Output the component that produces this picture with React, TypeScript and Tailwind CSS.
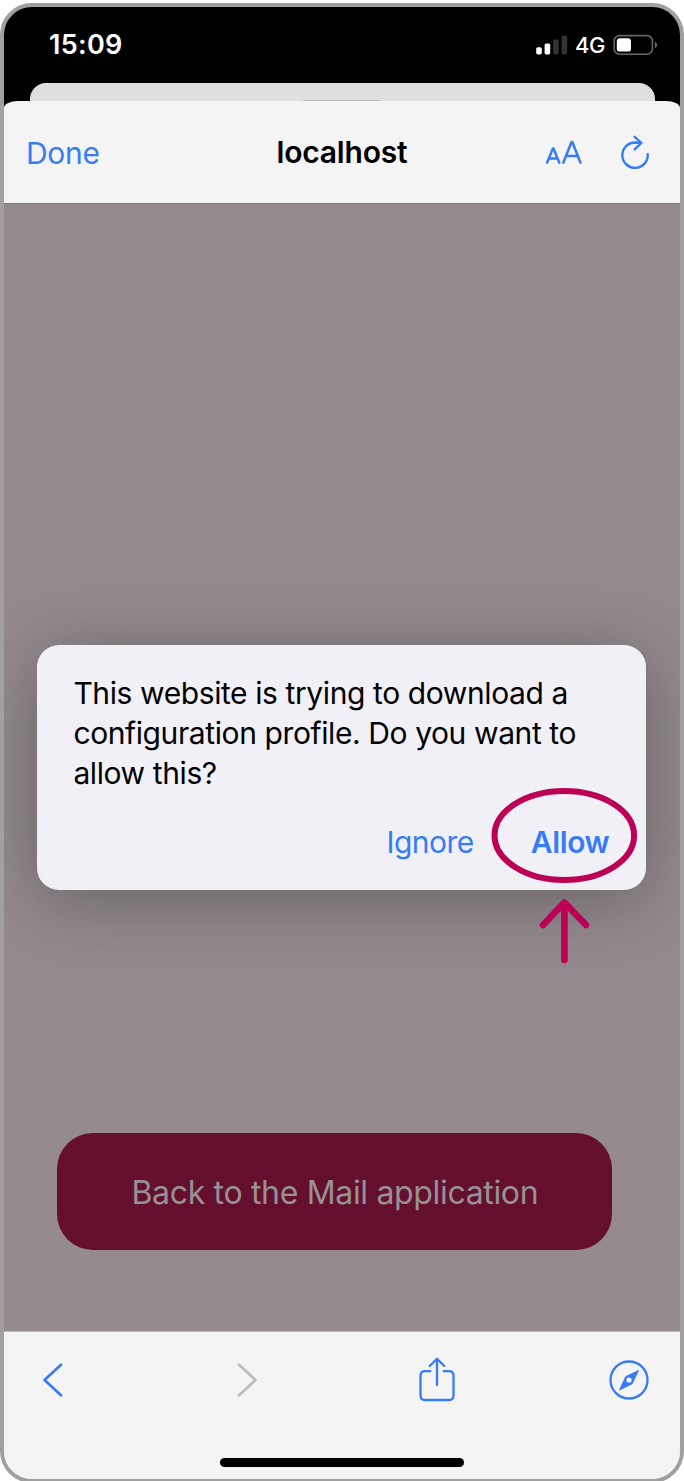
import React from "react";

function SignalBars() {
  return (
    <svg className="h-5 w-8" viewBox="0 0 32 20" fill="#fff">
      <rect x="0.2" y="12.2" width="5.6" height="7.2" rx="1.6" />
      <rect x="8.6" y="8.4" width="5.6" height="11" rx="1.6" />
      <rect x="17.1" y="4.4" width="5.6" height="15" rx="1.6" fill="#333" />
      <rect x="25.6" y="0.4" width="5.6" height="19" rx="1.6" fill="#333" />
    </svg>
  );
}

function Battery() {
  return (
    <svg className="h-[22px] w-[45px]" viewBox="0 0 45 22">
      <rect x="1.2" y="1.6" width="38.2" height="18.6" rx="5.4" fill="none" stroke="#666" strokeWidth="1.6" />
      <rect x="3.8" y="4.2" width="14.2" height="13.4" rx="3.2" fill="#fff" />
      <path d="M41.9 7.5 Q44 8.5 44 11 Q44 13.5 41.9 14.5 Z" fill="#666" />
    </svg>
  );
}

function StatusBar() {
  return (
    <div className="flex h-[76px] w-full shrink-0 items-start justify-between pl-[45px] pr-[22px] text-white">
      <span className="mt-[18.5px] text-[27px] font-semibold leading-[40px] tracking-[0.3px]">15:09</span>
      <div className="mt-[27px] flex h-[22px] items-center">
        <SignalBars />
        <span className="ml-[7px] w-[31px] whitespace-nowrap pt-px text-[22px] font-medium leading-[22px] tracking-[-0.4px]">4G</span>
        <span className="ml-[7px]">
          <Battery />
        </span>
      </div>
    </div>
  );
}

function NavBar() {
  return (
    <header className="z-10 grid h-[103px] w-full shrink-0 grid-cols-3 items-center rounded-t-[14px_7px] border-b border-[#807a7d] bg-[#f5f4f5] text-[30px] leading-[40px]">
      <span className="pl-[22px] pt-[2px] text-[#367cf7] tracking-[-0.3px]">Done</span>
      <span className="text-center font-semibold tracking-[-0.2px]">localhost</span>
      <span className="flex items-center justify-end pr-[30px] text-[#367cf7]">
        <svg className="h-[40px] w-[38px]" viewBox="0 0 38 40" fill="none" stroke="#367cf7" strokeWidth="2.5" strokeLinecap="round" strokeLinejoin="round">
          <path d="M2 30.7 L7.9 16.5 H8.5 L14.3 30.7 M4.1 26.5 H12.3" />
          <path d="M18.3 30.7 L26.5 10 H27.3 L35.5 30.7 M21.2 24 H32.7" />
        </svg>
        <svg className="ml-[37px] h-[40px] w-[30px]" viewBox="0 0 30 40" fill="none" stroke="#367cf7" strokeWidth="2.4" strokeLinecap="round" strokeLinejoin="round">
          <path d="M27.7 22.3 A12.7 12.7 0 1 1 15 10.5 L21.2 10.7" />
          <path d="M14.7 4.8 L21.3 11 L14.7 17.4" />
        </svg>
      </span>
    </header>
  );
}

function Dialog() {
  return (
    <div
      role="dialog"
      className="absolute left-[33.4px] top-[441.5px] flex h-[244.5px] w-[609px] flex-col rounded-[22px] bg-[#f1f0f6] pl-[36px] pr-[37px] pt-[27.6px] shadow-[0_10px_70px_rgba(40,45,40,0.42)]"
    >
      <p className="whitespace-nowrap text-[30px] leading-[40px] tracking-[-0.4px] text-black">
        <span className="block">This website is trying to download a</span>
        <span className="block">configuration profile. Do you want to</span>
        <span className="block">allow this?</span>
      </p>
      <div className="mt-[29.4px] flex justify-end gap-[57px] text-[30px] leading-[40px] text-[#367cf7]">
        <button className="tracking-[-0.5px]">Ignore</button>
        <button className="font-semibold tracking-[-0.4px]">Allow</button>
      </div>
      <svg className="absolute left-[450px] top-[139px] h-[190px] w-[156px]" viewBox="0 0 156 190" fill="none" stroke="#bb0055" strokeWidth="6" strokeLinecap="round" strokeLinejoin="round">
        <ellipse cx="77.3" cy="51.5" rx="69.8" ry="44.5" />
        <path strokeWidth="6.6" d="M77.4 176 V119 M56 141 L77.4 118.5 L99 141" />
      </svg>
    </div>
  );
}

function Toolbar() {
  return (
    <footer className="flex w-full flex-1 flex-col items-center border-t border-[#bdb9bb] bg-[#f5f4f5]">
      <div className="flex h-[97px] w-full items-center justify-between pl-[37px] pr-[31px]">
        <svg className="h-[38px] w-[24px]" viewBox="0 0 24 38" fill="none" stroke="#367cf7" strokeWidth="2.7" strokeLinecap="round" strokeLinejoin="round">
          <path d="M20 3.7 L3.5 19 L20 34.3" />
        </svg>
        <svg className="ml-[16px] h-[38px] w-[24px]" viewBox="0 0 24 38" fill="none" stroke="#bebdbe" strokeWidth="2.7" strokeLinecap="round" strokeLinejoin="round">
          <path d="M4 3.7 L20.5 19 L4 34.3" />
        </svg>
        <svg className="ml-[6px] h-[46px] w-[36px]" viewBox="0 0 36 46" fill="none" stroke="#367cf7" strokeWidth="2.3" strokeLinecap="round" strokeLinejoin="round">
          <path strokeLinecap="butt" d="M12.2 14.2 H6 Q1.5 14.2 1.5 18.7 V38.5 Q1.5 43 6 43 H30 Q34.5 43 34.5 38.5 V18.7 Q34.5 14.2 30 14.2 H23.8" />
          <path d="M18 28 V2 M10.7 9 L18 1.7 L25.3 9" />
        </svg>
        <svg className="h-10 w-10" viewBox="0 0 40 40" fill="none">
          <circle cx="20" cy="20" r="18.5" stroke="#367cf7" strokeWidth="2.3" />
          <path fill="#367cf7" fillRule="evenodd" d="M29.7 10 Q30.2 10 29.9 10.8 L24 22.9 Q23.5 23.9 22.6 24.4 L11 30.2 Q9.9 30.5 10.3 29.3 L16 17.2 Q16.5 16.2 17.5 15.7 Z M20 17.4 A2.6 2.6 0 1 0 20 22.6 A2.6 2.6 0 1 0 20 17.4 Z" />
        </svg>
      </div>
      <div className="mt-[29.5px] h-[9px] w-[244px] rounded-full bg-black" />
    </footer>
  );
}

export default function App() {
  return (
    <div className="h-[1481px] w-[684px] overflow-hidden bg-white pt-[2.5px] font-['Inter','Liberation_Sans',sans-serif]">
      <div className="flex h-[1480px] w-full flex-col items-center overflow-hidden rounded-[32px] border-4 border-[#a0a0a0] bg-[linear-gradient(#000_50%,#f5f4f5_50%)]">
        <StatusBar />
        <div className="-mb-[8px] flex h-[26px] w-[625px] shrink-0 justify-center rounded-t-[16px] bg-[#dfdfdf]">
          <div className="mt-[17px] h-[5px] w-[80px] rounded-full bg-[#bdbdbd]" />
        </div>
        <NavBar />
        <main className="relative z-20 flex h-[1127px] w-full shrink-0 flex-col justify-end bg-[#948a8f] pb-[80.6px] pl-[53.4px]">
          <button className="flex h-[117px] w-[555px] items-center justify-center rounded-[36px] bg-[#650f2e] text-[32px] text-[#989193]">
            <span className="whitespace-nowrap pt-[3px] leading-[40px] tracking-[-0.33px]">Back to the Mail application</span>
          </button>
          <Dialog />
        </main>
        <Toolbar />
      </div>
    </div>
  );
}
